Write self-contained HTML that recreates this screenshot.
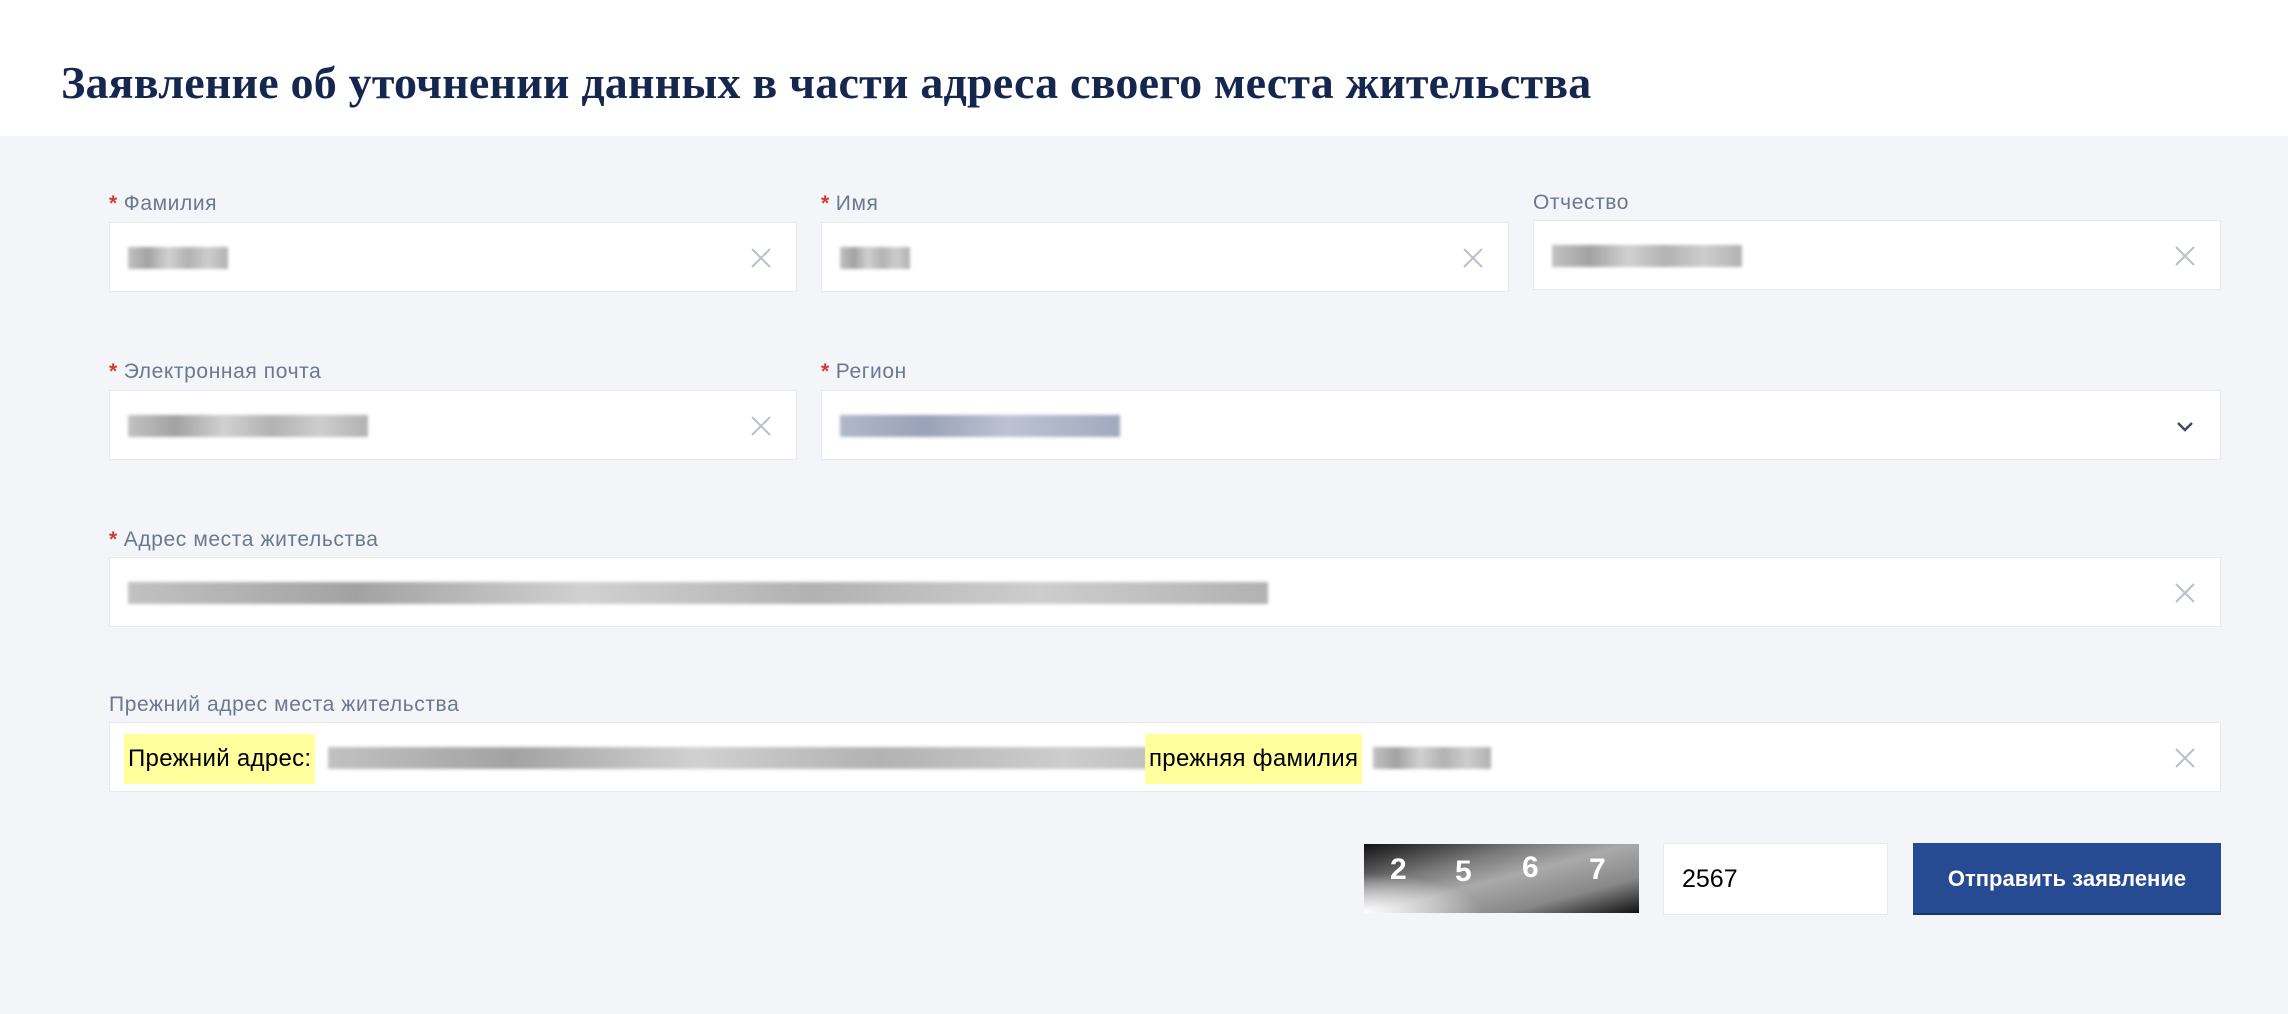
<!DOCTYPE html>
<html><head><meta charset="utf-8"><style>
*{margin:0;padding:0;box-sizing:border-box}
body{width:2288px;height:1014px;background:#f4f5f9;font-family:"Liberation Sans",sans-serif;position:relative;overflow:hidden}
.hdr{position:absolute;left:0;top:0;width:2288px;height:136px;background:#fff}
h1{position:absolute;left:61px;top:56px;font-family:"Liberation Serif",serif;font-weight:bold;font-size:46px;color:#15264f;white-space:nowrap;letter-spacing:0.2px}
.lbl{position:absolute;font-size:21px;letter-spacing:0.6px;color:#6a7890;white-space:nowrap}
.lbl b{color:#d2392c;font-weight:bold;margin-right:6px}
.inp{position:absolute;background:#fff;border:1px solid #e8eaef;height:70px}
.x{position:absolute;right:24px;top:24px;width:22px;height:22px}
.blur{position:absolute;top:24px;height:22px;background:linear-gradient(90deg,#bbb,#999 20%,#ccc 40%,#aaa 60%,#c8c8c8 80%,#aaa);filter:blur(1.5px);opacity:.9}
.hl{position:absolute;background:#ffff9e;font-size:24px;letter-spacing:0.3px;color:#000;height:50px;line-height:50px;padding:0 4px;top:11px;white-space:nowrap}
</style></head><body>
<div class="hdr"></div>
<h1>Заявление об уточнении данных в части адреса своего места жительства</h1>

<div class="lbl" style="left:109px;top:192px"><b>*</b>Фамилия</div>
<div class="lbl" style="left:821px;top:192px"><b>*</b>Имя</div>
<div class="lbl" style="left:1533px;top:191px">Отчество</div>
<div class="inp" style="left:109px;top:222px;width:688px"><div class="blur" style="left:18px;width:100px"></div><svg class="x" viewBox="0 0 22 22"><path d="M2 2L20 20M20 2L2 20" stroke="#b9bfcc" stroke-width="2"/></svg></div>
<div class="inp" style="left:821px;top:222px;width:688px"><div class="blur" style="left:18px;width:70px"></div><svg class="x" viewBox="0 0 22 22"><path d="M2 2L20 20M20 2L2 20" stroke="#b9bfcc" stroke-width="2"/></svg></div>
<div class="inp" style="left:1533px;top:220px;width:688px"><div class="blur" style="left:18px;width:190px"></div><svg class="x" viewBox="0 0 22 22"><path d="M2 2L20 20M20 2L2 20" stroke="#b9bfcc" stroke-width="2"/></svg></div>

<div class="lbl" style="left:109px;top:360px"><b>*</b>Электронная почта</div>
<div class="lbl" style="left:821px;top:360px"><b>*</b>Регион</div>
<div class="inp" style="left:109px;top:390px;width:688px"><div class="blur" style="left:18px;width:240px"></div><svg class="x" viewBox="0 0 22 22"><path d="M2 2L20 20M20 2L2 20" stroke="#b9bfcc" stroke-width="2"/></svg></div>
<div class="inp" style="left:821px;top:390px;width:1400px"><div class="blur" style="left:18px;width:280px;background:linear-gradient(90deg,#a9b0c4,#8f98b2 30%,#b5bccd 60%,#98a1b9)"></div><svg class="x" viewBox="0 0 22 22"><path d="M4 8L11 15L18 8" stroke="#3c4a6b" stroke-width="2.5" fill="none"/></svg></div>

<div class="lbl" style="left:109px;top:528px"><b>*</b>Адрес места жительства</div>
<div class="inp" style="left:109px;top:557px;width:2112px"><div class="blur" style="left:18px;width:1140px"></div><svg class="x" viewBox="0 0 22 22"><path d="M2 2L20 20M20 2L2 20" stroke="#b9bfcc" stroke-width="2"/></svg></div>

<div class="lbl" style="left:109px;top:693px">Прежний адрес места жительства</div>
<div class="inp" style="left:109px;top:722px;width:2112px">
<div class="hl" style="left:14px">Прежний адрес:</div>
<div class="blur" style="left:218px;width:920px"></div>
<div class="hl" style="left:1035px">прежняя фамилия</div>
<div class="blur" style="left:1263px;width:118px"></div>
<svg class="x" viewBox="0 0 22 22"><path d="M2 2L20 20M20 2L2 20" stroke="#b9bfcc" stroke-width="2"/></svg></div>

<div style="position:absolute;left:1364px;top:844px;width:275px;height:69px;background:linear-gradient(165deg,#111 0%,#777 30%,#aaa 50%,#888 75%,#111 100%);overflow:hidden">
<div style="position:absolute;left:0;bottom:0;width:120px;height:40px;background:radial-gradient(ellipse at 0 100%,#fff,rgba(255,255,255,0) 70%)"></div>
<span style="position:absolute;left:26px;top:9px;color:#fff;font-weight:bold;font-size:30px">2</span>
<span style="position:absolute;left:91px;top:11px;color:#fff;font-weight:bold;font-size:30px">5</span>
<span style="position:absolute;left:158px;top:7px;color:#fff;font-weight:bold;font-size:30px">6</span>
<span style="position:absolute;left:225px;top:9px;color:#fff;font-weight:bold;font-size:30px">7</span>
</div>
<div class="inp" style="left:1663px;top:843px;width:225px;height:72px;font-size:25px;line-height:70px;padding-left:18px;color:#000">2567</div>
<div style="position:absolute;left:1913px;top:843px;width:308px;height:72px;background:#274b93;border-bottom:2px solid #1a3573;color:#fff;font-weight:bold;font-size:22px;line-height:72px;text-align:center">Отправить заявление</div>
</body></html>
